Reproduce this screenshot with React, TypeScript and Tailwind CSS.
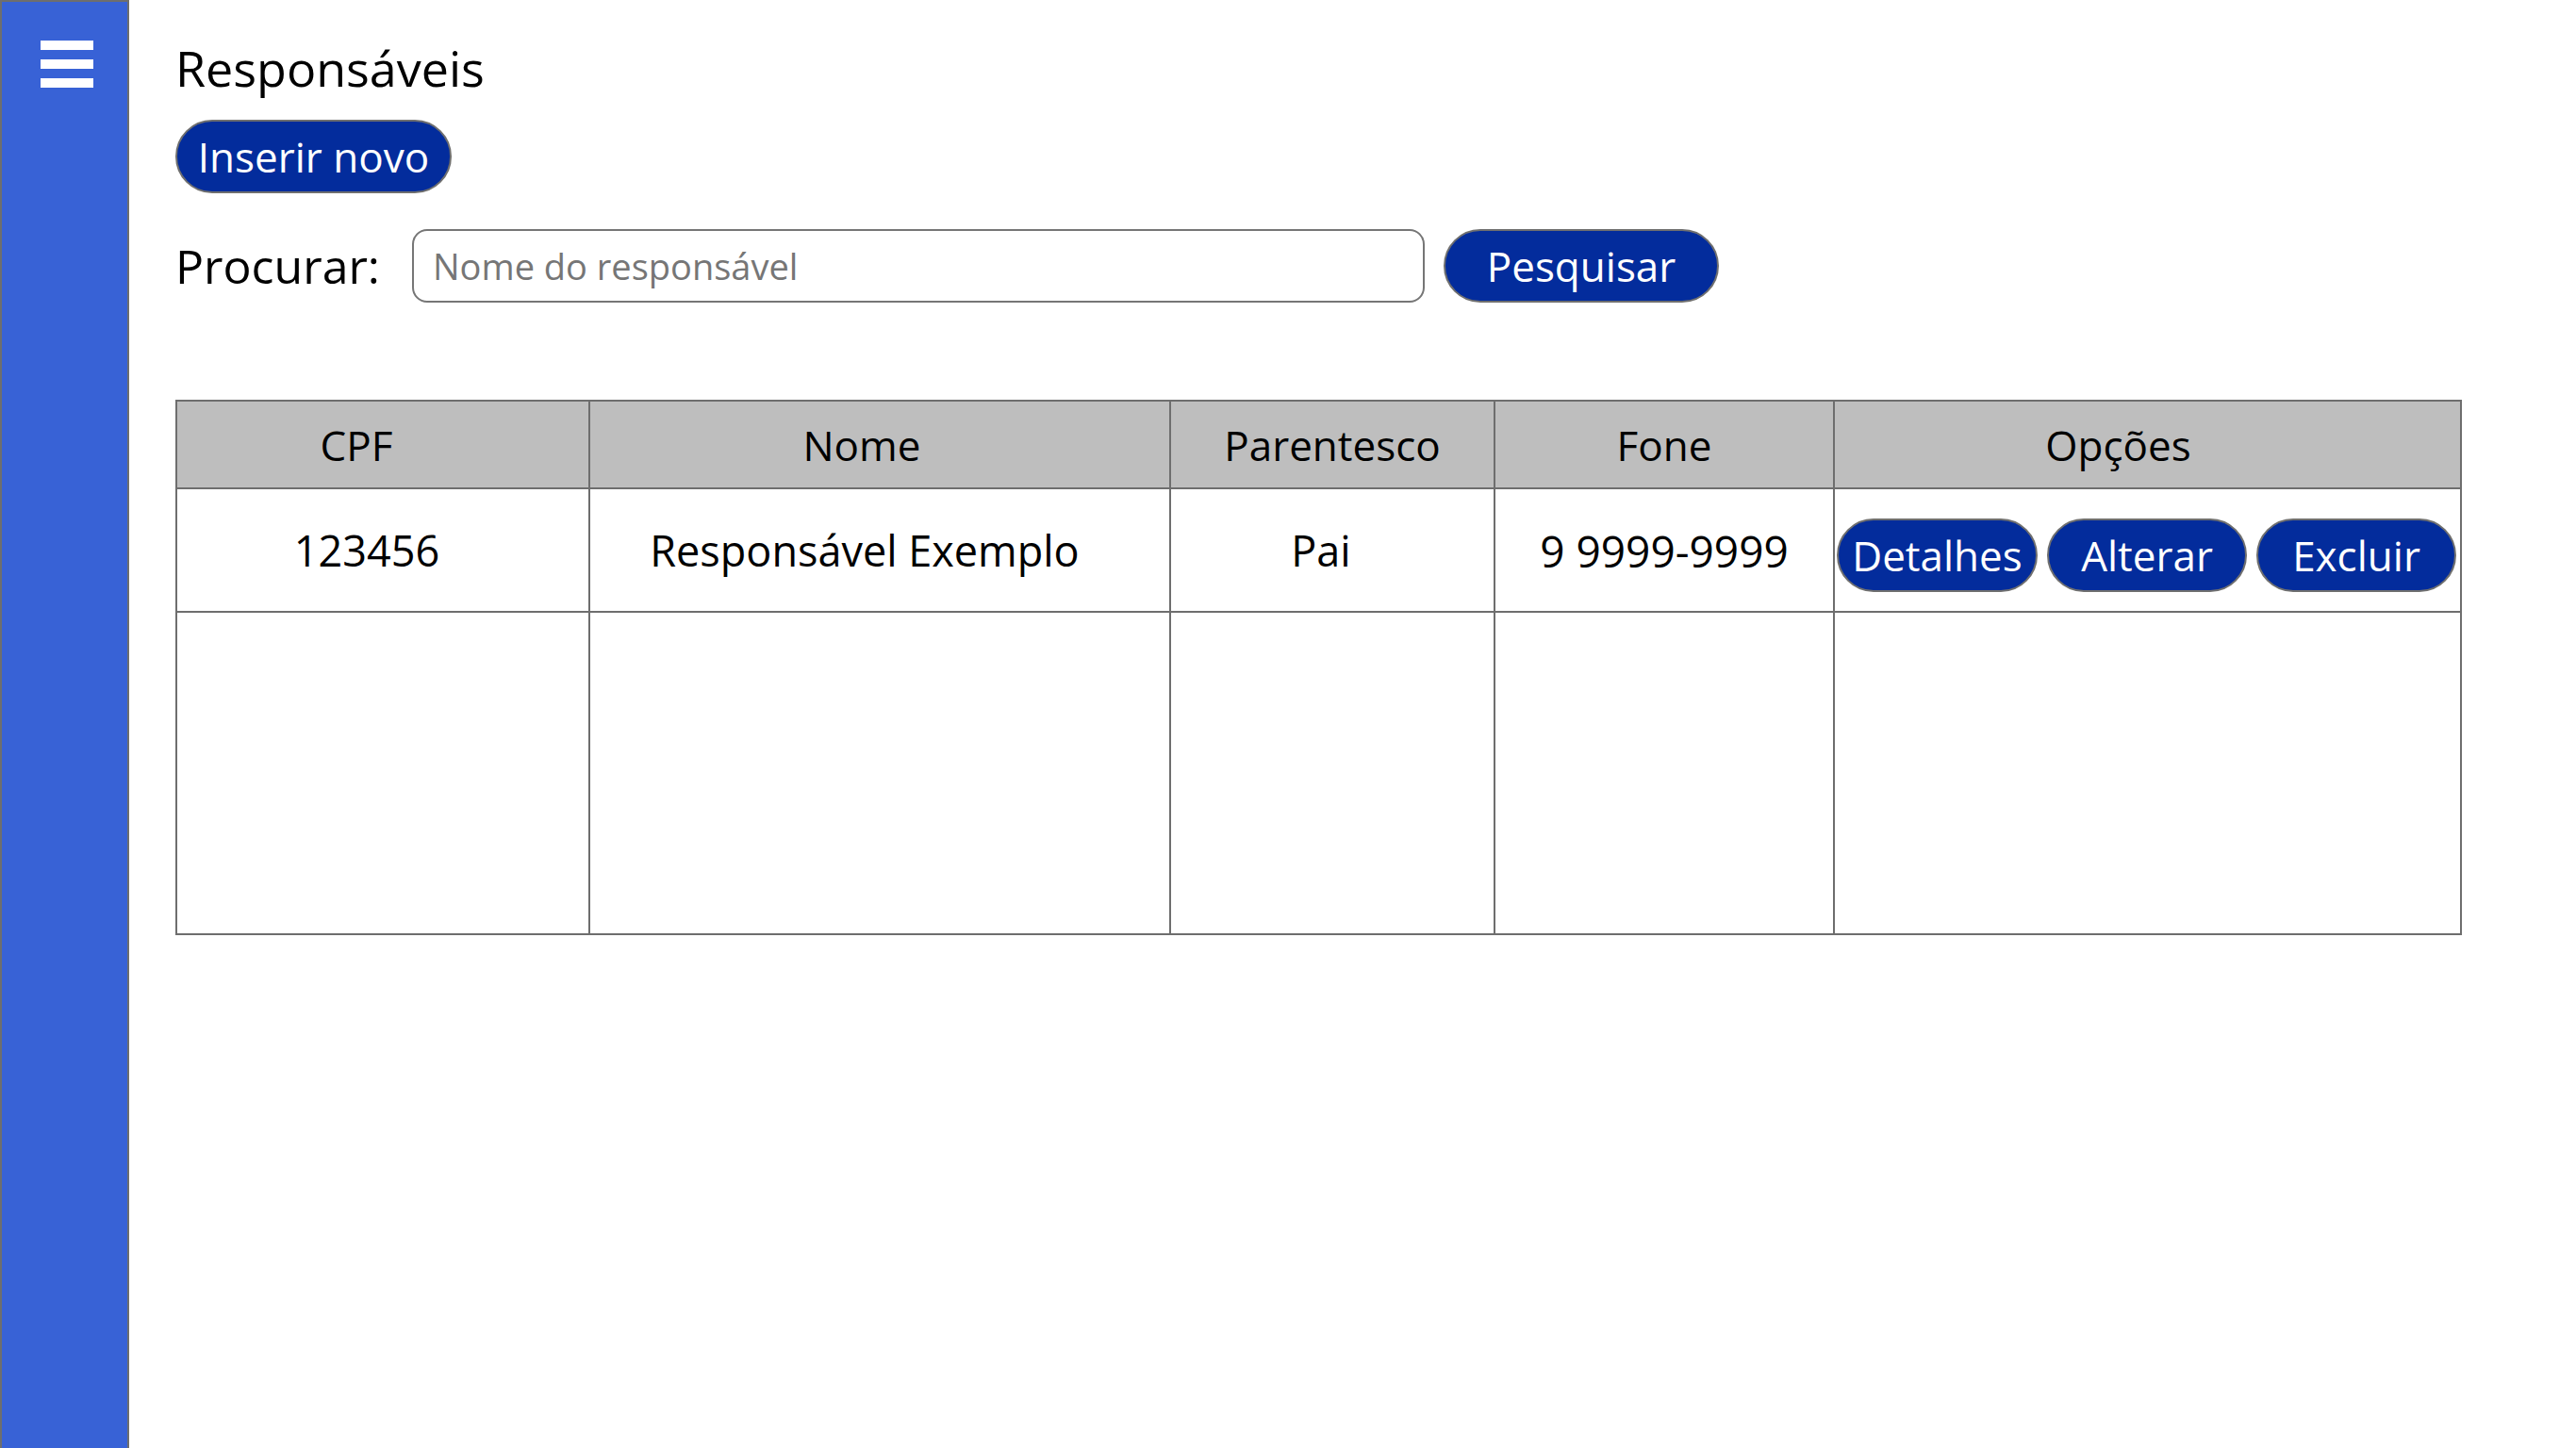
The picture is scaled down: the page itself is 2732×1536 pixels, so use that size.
import React from "react";

const rows = [
  { cpf: "123456", nome: "Responsável Exemplo", parentesco: "Pai", fone: "9 9999-9999" },
];

function PillButton({ label, className }: { label: string; className?: string }) {
  return (
    <button
      type="button"
      className={
        "flex items-center justify-center rounded-full border-2 border-[#6f6f6f] bg-[#032c9c] text-[44px] leading-none text-white " +
        (className ?? "")
      }
    >
      {label}
    </button>
  );
}

const cell = "border-2 border-[#6e6e6e] text-center align-middle leading-none";

export default function App() {
  return (
    <div className="flex h-[1536px] w-full bg-white font-['Open_Sans',sans-serif] text-black">
      <aside className="w-[137px] shrink-0 border-x-2 border-t-2 border-[#6e6e6e] bg-[#3862d6] pl-[41px] pt-[41px]">
        <div className="flex w-[56px] flex-col gap-[10px]">
          <span className="block h-[10px] w-full bg-white" />
          <span className="block h-[10px] w-full bg-white" />
          <span className="block h-[10px] w-full bg-white" />
        </div>
      </aside>

      <main className="flex flex-1 flex-col items-start pl-[49px] pt-[42px]">
        <h1 className="text-[52px] font-normal leading-[60px]">Responsáveis</h1>

        <PillButton label="Inserir novo" className="mt-[25px] h-[78px] w-[293px]" />

        <div className="mt-[38px] flex h-[78px] items-center">
          <span className="w-[251px] text-[50px] leading-none">Procurar:</span>
          <input
            type="text"
            placeholder="Nome do responsável"
            className="h-full w-[1074px] rounded-[16px] border-2 border-[#767676] bg-white pl-[20px] text-[38px] text-black outline-none placeholder:text-[#767676]"
          />
          <PillButton label="Pesquisar" className="ml-[20px] h-full w-[292px]" />
        </div>

        <table className="mt-[103px] w-[2423px] table-fixed border-collapse">
          <colgroup>
            <col className="w-[438px]" />
            <col className="w-[616px]" />
            <col className="w-[344px]" />
            <col className="w-[360px]" />
            <col className="w-[665px]" />
          </colgroup>
          <thead>
            <tr className="h-[93px] bg-[#bebebe] text-[44px]">
              <th className={cell + " pr-[56px] font-normal"}>CPF</th>
              <th className={cell + " pr-[38px] font-normal"}>Nome</th>
              <th className={cell + " font-normal"}>Parentesco</th>
              <th className={cell + " font-normal"}>Fone</th>
              <th className={cell + " pr-[62px] font-normal"}>Opções</th>
            </tr>
          </thead>
          <tbody>
            {rows.map((r) => (
              <tr key={r.cpf} className="h-[131px] text-[45px]">
                <td className={cell + " pr-[34px]"}>{r.cpf}</td>
                <td className={cell + " pr-[32px]"}>{r.nome}</td>
                <td className={cell + " pr-[24px]"}>{r.parentesco}</td>
                <td className={cell + " text-[46px]"}>{r.fone}</td>
                <td className="border-2 border-[#6e6e6e] align-middle">
                  <div className="flex gap-[10px] pl-[2px] pt-[11px]">
                    <PillButton label="Detalhes" className="h-[78px] w-[213px]" />
                    <PillButton label="Alterar" className="h-[78px] w-[212px]" />
                    <PillButton label="Excluir" className="h-[78px] w-[212px]" />
                  </div>
                </td>
              </tr>
            ))}
            <tr className="h-[342px]">
              <td className="border-2 border-[#6e6e6e]" />
              <td className="border-2 border-[#6e6e6e]" />
              <td className="border-2 border-[#6e6e6e]" />
              <td className="border-2 border-[#6e6e6e]" />
              <td className="border-2 border-[#6e6e6e]" />
            </tr>
          </tbody>
        </table>
      </main>
    </div>
  );
}
